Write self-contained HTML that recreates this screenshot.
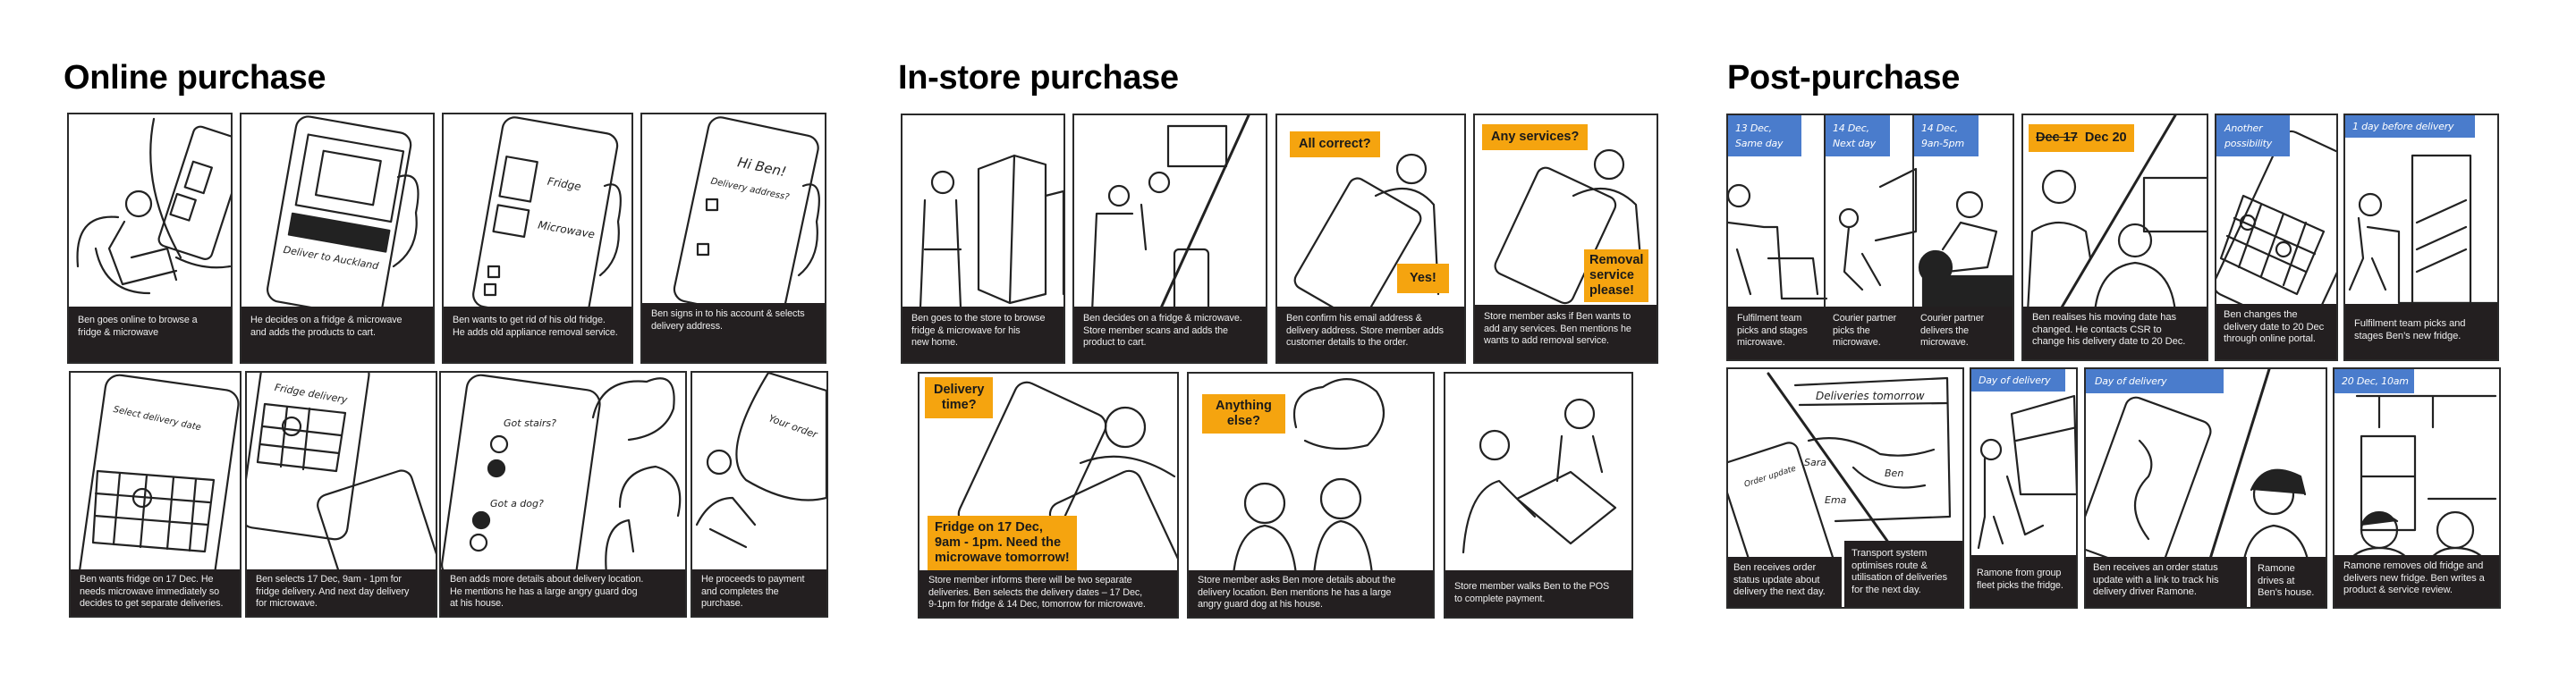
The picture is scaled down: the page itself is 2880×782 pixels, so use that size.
<!DOCTYPE html>
<html><head><meta charset="utf-8"><style>
*{margin:0;padding:0;box-sizing:border-box}
body{width:2880px;height:782px;background:#fff;position:relative;overflow:hidden;font-family:"Liberation Sans",sans-serif}
h1{position:absolute;top:66px;font-size:38px;font-weight:bold;color:#000;letter-spacing:-0.3px}
.p{position:absolute;border:2px solid #2a2a2a;background:#fff;overflow:hidden}
.c{position:absolute;left:0;right:0;bottom:0;background:#231f20;color:#eee;font-size:10.8px;line-height:13.6px;padding:9px 10px;white-space:nowrap;letter-spacing:-0.1px}
.cc{position:absolute;background:#231f20;color:#eee;font-size:10.8px;line-height:13.6px;padding:8px 8px;white-space:nowrap;letter-spacing:-0.1px}
svg.s{position:absolute;left:0;top:0}
svg.s *{fill:none;stroke:#222;stroke-width:2.2;stroke-linecap:round;stroke-linejoin:round}
svg.s text{stroke:none;fill:#222;font-family:"DejaVu Sans",sans-serif;font-style:italic}
.o{position:absolute;background:#f5a40f;color:#1a1a1a;font-weight:bold;font-size:14.5px;line-height:17px;padding:5px 8px;white-space:nowrap}
.b{position:absolute;background:#4a7ccc;color:#fff;font-family:"DejaVu Sans",sans-serif;font-style:italic;font-size:11px;line-height:17px;padding:4px 8px;white-space:nowrap;letter-spacing:-0.2px}
.v{position:absolute;width:2px;background:#2a2a2a}
</style></head><body>

<h1 style="left:71px">Online purchase</h1>
<h1 style="left:1004px">In-store purchase</h1>
<h1 style="left:1931px">Post-purchase</h1>

<!-- ONLINE ROW 1 -->
<div class="p" style="left:75px;top:126px;width:185px;height:281px">
<svg class="s" width="185" height="220"><path d="M95 5 Q80 80 125 160 M120 160 Q150 175 180 170"/><rect x="118" y="18" width="62" height="140" rx="8" transform="rotate(18 150 90)"/><rect x="128" y="58" width="22" height="30" transform="rotate(18 150 90)"/><rect x="122" y="98" width="22" height="24" transform="rotate(18 150 90)"/><circle cx="78" cy="100" r="14"/><path d="M10 170 Q5 110 55 115 M62 120 L45 150 L60 190 L120 175 M70 160 L110 150 L120 185 M30 150 Q40 200 90 200"/></svg>
<div class="c" style="height:62px">Ben goes online to browse a<br>fridge &amp; microwave</div></div>
<div class="p" style="left:268px;top:126px;width:218px;height:281px">
<svg class="s" width="218" height="220"><rect x="45" y="10" width="130" height="210" rx="14" transform="rotate(10 110 110)"/><rect x="60" y="30" width="108" height="80" transform="rotate(10 110 110)"/><rect x="80" y="45" width="65" height="50" transform="rotate(10 110 110)"/><rect x="58" y="120" width="110" height="24" transform="rotate(10 110 110)" style="fill:#222"/><path d="M175 70 Q205 60 195 110 Q200 150 170 170"/><text x="55" y="165" font-size="11" transform="rotate(10 110 110)">Deliver to Auckland</text></svg>
<div class="c" style="height:62px">He decides on a fridge &amp; microwave<br>and adds the products to cart.</div></div>
<div class="p" style="left:494px;top:126px;width:214px;height:281px">
<svg class="s" width="214" height="220"><rect x="50" y="10" width="130" height="215" rx="14" transform="rotate(10 110 110)"/><rect x="60" y="55" width="35" height="45" transform="rotate(10 110 110)"/><rect x="60" y="110" width="35" height="30" transform="rotate(10 110 110)"/><rect x="50" y="170" width="12" height="12"/><rect x="46" y="190" width="12" height="12"/><path d="M180 80 Q205 70 195 120 Q200 160 175 180"/><text x="110" y="78" font-size="12" transform="rotate(10 110 110)">Fridge</text><text x="108" y="128" font-size="12" transform="rotate(10 110 110)">Microwave</text></svg>
<div class="c" style="height:62px">Ben wants to get rid of his old fridge.<br>He adds old appliance removal service.</div></div>
<div class="p" style="left:716px;top:126px;width:208px;height:281px">
<svg class="s" width="208" height="220"><rect x="55" y="10" width="125" height="210" rx="14" transform="rotate(12 110 110)"/><rect x="72" y="95" width="12" height="12"/><rect x="62" y="145" width="12" height="12"/><path d="M180 80 Q205 70 195 120 Q200 160 175 180"/><text x="95" y="60" font-size="15" transform="rotate(12 110 110)">Hi Ben!</text><text x="70" y="85" font-size="10" transform="rotate(12 110 110)">Delivery address?</text></svg>
<div class="c" style="height:66px;padding-top:6px">Ben signs in to his account &amp; selects<br>delivery address.</div></div>

<!-- ONLINE ROW 2 -->
<div class="p" style="left:77px;top:415px;width:193px;height:276px">
<svg class="s" width="193" height="225"><rect x="25" y="10" width="150" height="240" rx="16" transform="rotate(8 100 120)"/><path d="M30 110 L160 120 L150 200 L25 190 Z M55 112 L48 192 M85 115 L78 195 M115 117 L108 197 M140 119 L133 199 M28 135 L155 145 M27 160 L153 170"/><circle cx="80" cy="140" r="10"/><text x="45" y="55" font-size="10" transform="rotate(12 100 60)">Select delivery date</text></svg>
<div class="c" style="height:52px;padding-top:5px">Ben wants fridge on 17 Dec. He<br>needs microwave immediately so<br>decides to get separate deliveries.</div></div>
<div class="p" style="left:274px;top:415px;width:215px;height:276px">
<svg class="s" width="215" height="225"><rect x="5" y="-20" width="120" height="200" rx="14" transform="rotate(8 60 80)"/><path d="M20 35 L110 45 L100 110 L12 100 Z M45 38 L38 105 M70 40 L63 108 M18 60 L105 70 M15 80 L103 90"/><circle cx="50" cy="60" r="10"/><rect x="95" y="120" width="110" height="140" rx="12" transform="rotate(-18 150 190)"/><text x="30" y="25" font-size="11" transform="rotate(10 60 25)">Fridge delivery</text></svg>
<div class="c" style="height:52px;padding-top:5px">Ben selects 17 Dec, 9am - 1pm for<br>fridge delivery. And next day delivery<br>for microwave.</div></div>
<div class="p" style="left:491px;top:415px;width:277px;height:276px">
<svg class="s" width="277" height="225"><rect x="15" y="10" width="150" height="230" rx="16" transform="rotate(8 90 120)"/><circle cx="65" cy="80" r="9"/><circle cx="62" cy="107" r="9" style="fill:#222"/><circle cx="45" cy="165" r="9" style="fill:#222"/><circle cx="42" cy="190" r="9"/><path d="M170 50 Q180 5 230 10 Q265 -5 260 40 Q250 70 210 75 M200 150 Q200 110 240 105 Q275 115 265 160 M185 225 Q180 170 210 165 L215 200"/><text x="70" y="60" font-size="11">Got stairs?</text><text x="55" y="150" font-size="11">Got a dog?</text></svg>
<div class="c" style="height:52px;padding-top:5px">Ben adds more details about delivery location.<br>He mentions he has a large angry guard dog<br>at his house.</div></div>
<div class="p" style="left:772px;top:415px;width:154px;height:276px">
<svg class="s" width="154" height="225"><path d="M85 0 L150 20 L150 140 Q110 150 60 120 Q30 90 85 0"/><circle cx="30" cy="100" r="13"/><path d="M5 170 Q20 140 45 140 L70 170 M20 175 L60 195"/><text x="80" y="60" font-size="11" transform="rotate(20 100 70)">Your order</text></svg>
<div class="c" style="height:52px;padding-top:5px">He proceeds to payment<br>and completes the<br>purchase.</div></div>

<!-- IN-STORE ROW 1 -->
<div class="p" style="left:1007px;top:127px;width:184px;height:280px">
<svg class="s" width="184" height="220"><path d="M85 60 L125 45 L160 55 L160 200 L120 210 L85 195 Z M125 45 L120 210"/><path d="M160 90 L180 85 L180 200"/><circle cx="45" cy="75" r="12"/><path d="M25 95 L20 215 M60 95 L65 215 M25 150 L65 150"/></svg>
<div class="c" style="height:62px;padding-top:7px">Ben goes to the store to browse<br>fridge &amp; microwave for his<br>new home.</div></div>
<div class="p" style="left:1199px;top:127px;width:218px;height:280px">
<svg class="s" width="218" height="220"><path d="M195 0 L95 220" style="stroke-width:3"/><rect x="105" y="12" width="65" height="45"/><rect x="112" y="150" width="38" height="70" rx="5"/><circle cx="50" cy="90" r="11"/><circle cx="95" cy="75" r="11"/><path d="M20 220 L25 110 L65 110 M75 100 L80 150"/></svg>
<div class="c" style="height:62px;padding-top:7px">Ben decides on a fridge &amp; microwave.<br>Store member scans and adds the<br>product to cart.</div></div>
<div class="p" style="left:1426px;top:127px;width:213px;height:280px">
<svg class="s" width="213" height="220"><rect x="45" y="80" width="90" height="140" rx="10" transform="rotate(30 90 150)"/><circle cx="150" cy="60" r="16"/><path d="M110 90 Q150 70 175 100 L180 200"/></svg>
<div class="o" style="left:14px;top:18px;padding:6px 10px">All correct?</div>
<div class="o" style="left:134px;top:166px;padding:8px 14px">Yes!</div>
<div class="c" style="height:62px;padding-top:7px">Ben confirm his email address &amp;<br>delivery address. Store member adds<br>customer details to the order.</div></div>
<div class="p" style="left:1647px;top:127px;width:207px;height:280px">
<svg class="s" width="207" height="220"><rect x="40" y="70" width="95" height="130" rx="10" transform="rotate(25 90 140)"/><circle cx="150" cy="55" r="16"/><path d="M110 90 Q150 70 180 100 L185 160"/></svg>
<div class="o" style="left:8px;top:10px;padding:6px 10px">Any services?</div>
<div class="o" style="left:122px;top:150px;padding:4px 6px">Removal<br>service<br>please!</div>
<div class="c" style="height:64px;padding-top:7px">Store member asks if Ben wants to<br>add any services. Ben mentions he<br>wants to add removal service.</div></div>

<!-- IN-STORE ROW 2 -->
<div class="p" style="left:1026px;top:416px;width:292px;height:276px">
<svg class="s" width="292" height="225"><rect x="70" y="20" width="110" height="175" rx="14" transform="rotate(25 125 110)"/><rect x="170" y="120" width="110" height="175" rx="14" transform="rotate(-25 225 200)"/><circle cx="230" cy="60" r="22"/><path d="M180 100 Q230 80 285 115"/></svg>
<div class="o" style="left:6px;top:4px;padding:6px 10px;text-align:center">Delivery<br>time?</div>
<div class="o" style="left:9px;top:159px;padding:5px 8px">Fridge on 17 Dec,<br>9am - 1pm. Need the<br>microwave tomorrow!</div>
<div class="c" style="height:52px;padding-top:5px">Store member informs there will be two separate<br>deliveries. Ben selects the delivery dates – 17 Dec,<br>9-1pm for fridge &amp; 14 Dec, tomorrow for microwave.</div></div>
<div class="p" style="left:1327px;top:416px;width:277px;height:276px">
<svg class="s" width="277" height="225"><path d="M120 60 Q110 20 150 15 Q180 -5 210 20 Q230 50 200 80 Q160 90 130 75"/><circle cx="85" cy="145" r="22"/><circle cx="170" cy="140" r="22"/><path d="M50 225 Q55 175 85 170 Q115 175 120 225 M140 225 Q145 170 170 165 Q200 170 205 225"/></svg>
<div class="o" style="left:15px;top:23px;padding:5px 15px;text-align:center">Anything<br>else?</div>
<div class="c" style="height:52px;padding-top:5px">Store member asks Ben more details about the<br>delivery location. Ben mentions he has a large<br>angry guard dog at his house.</div></div>
<div class="p" style="left:1614px;top:416px;width:212px;height:276px">
<svg class="s" width="212" height="225"><circle cx="55" cy="80" r="16"/><circle cx="150" cy="45" r="16"/><path d="M20 200 Q25 130 60 120 L100 160 M80 140 L140 110 L190 150 L140 190 Z M130 70 L125 120 M165 70 L175 110"/></svg>
<div class="c" style="height:52px;padding-top:12px">Store member walks Ben to the POS<br>to complete payment.</div></div>

<!-- POST ROW 1 -->
<div class="p" style="left:1930px;top:127px;width:322px;height:277px">
<svg class="s" width="322" height="220"><circle cx="12" cy="90" r="12"/><path d="M0 120 L40 125 L55 125 L60 205 L110 205 M45 160 L95 160 L100 200 M10 150 L25 200"/><circle cx="135" cy="115" r="10"/><path d="M135 125 L130 175 L150 195 M170 80 L210 60 L210 130 L165 140 M150 155 L170 190"/><circle cx="232" cy="170" r="18" style="fill:#222"/><circle cx="270" cy="100" r="14"/><path d="M240 150 L260 120 L300 130 L290 170 L245 175"/><rect x="218" y="180" width="100" height="40" style="fill:#222"/></svg>
<div class="v" style="left:107px;top:0;height:220px"></div><div class="v" style="left:206px;top:0;height:220px"></div>
<div class="b" style="left:0;top:0;width:82px;padding-top:6px;padding-bottom:6px">13 Dec,<br>Same day</div>
<div class="b" style="left:109px;top:0;width:72px;padding-top:6px;padding-bottom:6px">14 Dec,<br>Next day</div>
<div class="b" style="left:208px;top:0;width:72px;padding-top:6px;padding-bottom:6px">14 Dec,<br>9an-5pm</div>
<div class="c" style="height:59px;padding:8px 10px"><span style="position:absolute;left:10px;top:7px">Fulfilment team<br>picks and stages<br>microwave.</span><span style="position:absolute;left:117px;top:7px">Courier partner<br>picks the<br>microwave.</span><span style="position:absolute;left:215px;top:7px">Courier partner<br>delivers the<br>microwave.</span></div></div>
<div class="p" style="left:2260px;top:127px;width:209px;height:277px">
<svg class="s" width="209" height="220"><path d="M170 0 L40 220" style="stroke-width:3"/><circle cx="40" cy="80" r="18"/><path d="M5 220 L10 130 Q40 110 70 130 L75 160"/><rect x="135" y="70" width="72" height="60"/><circle cx="125" cy="140" r="18"/><path d="M80 220 Q85 170 125 165 Q165 170 170 220"/></svg>
<div class="o" style="left:6px;top:10px;padding:7px 8px"><s>Dec 17</s>&nbsp; Dec 20</div>
<div class="c" style="height:59px;padding-top:6px;font-size:11.2px">Ben realises his moving date has<br>changed. He contacts CSR to<br>change his delivery date to 20 Dec.</div></div>
<div class="p" style="left:2476px;top:127px;width:138px;height:277px">
<svg class="s" width="138" height="220"><rect x="30" y="30" width="120" height="200" rx="12" transform="rotate(25 90 130)"/><path d="M30 90 L120 130 L90 200 L5 160 Z M50 100 L25 170 M75 110 L50 180 M100 120 L75 190 M20 115 L110 155 M12 135 L100 175"/><circle cx="35" cy="120" r="8"/><circle cx="75" cy="150" r="8"/></svg>
<div class="b" style="left:0;top:0;width:82px;padding:6px 9px">Another<br>possibility</div>
<div class="c" style="height:62px;padding:6px 8px;font-size:11.2px">Ben changes the<br>delivery date to 20 Dec<br>through online portal.</div></div>
<div class="p" style="left:2620px;top:127px;width:174px;height:277px">
<svg class="s" width="174" height="220"><rect x="75" y="45" width="65" height="165"/><path d="M80 120 L135 95 M80 150 L135 125 M80 175 L135 150"/><circle cx="28" cy="100" r="12"/><path d="M15 115 L20 160 L5 195 M30 160 L45 195 M25 125 L60 130 L60 210 L170 210"/></svg>
<div class="b" style="left:0;top:0;width:145px">1 day before delivery</div>
<div class="c" style="height:62px;padding-top:16px;font-size:11.2px">Fulfilment team picks and<br>stages Ben’s new fridge.</div></div>

<!-- POST ROW 2 -->
<div class="p" style="left:1930px;top:411px;width:266px;height:270px">
<svg class="s" width="266" height="270"><path d="M45 5 L180 195" style="stroke-width:3"/><path d="M75 18 L245 10 L248 165 L120 170"/><path d="M80 40 L245 38"/><rect x="10" y="90" width="90" height="150" rx="10" transform="rotate(-18 55 165)"/><path d="M90 80 Q130 70 170 95 Q200 100 230 90 M140 110 Q170 140 220 130"/><text x="98" y="34" font-size="12">Deliveries tomorrow</text><text x="85" y="108" font-size="11">Sara</text><text x="175" y="120" font-size="11">Ben</text><text x="108" y="150" font-size="11">Ema</text><text x="18" y="125" font-size="9" transform="rotate(-18 40 125)">Order update</text></svg>
<div class="cc" style="left:-2px;top:210px;width:129px;height:58px;padding:6px 8px;font-size:11.2px">Ben receives order<br>status update about<br>delivery the next day.</div>
<div class="cc" style="left:130px;top:192px;width:134px;height:76px;padding:8px 8px;font-size:11.2px">Transport system<br>optimises route &amp;<br>utilisation of deliveries<br>for the next day.</div></div>
<div class="p" style="left:2202px;top:411px;width:121px;height:270px">
<svg class="s" width="121" height="225"><path d="M45 50 L115 30 L118 140 L55 140 Z M50 80 L118 65"/><circle cx="22" cy="90" r="11"/><path d="M15 100 L15 165 L8 200 M25 165 L35 195 M40 120 L60 185 L80 175"/></svg>
<div class="b" style="left:0;top:0;width:105px">Day of delivery</div>
<div class="c" style="height:58px;padding:14px 6px">Ramone from group<br>fleet picks the fridge.</div></div>
<div class="p" style="left:2330px;top:411px;width:272px;height:270px">
<svg class="s" width="272" height="225"><path d="M205 0 L135 225" style="stroke-width:3"/><rect x="15" y="40" width="100" height="180" rx="12" transform="rotate(20 65 130)"/><path d="M60 80 Q80 100 70 120 Q40 150 70 190"/><circle cx="210" cy="140" r="22"/><path d="M185 135 Q200 100 240 120 L245 140" style="fill:#222"/><path d="M175 225 Q180 180 210 175 Q245 180 250 225"/></svg>
<div class="b" style="left:0;top:0;width:154px;padding:5px 10px">Day of delivery</div>
<div class="cc" style="left:0;top:210px;width:180px;height:58px;padding:6px 8px;font-size:11.2px">Ben receives an order status<br>update with a link to track his<br>delivery driver Ramone.</div>
<div class="cc" style="left:184px;top:210px;width:86px;height:58px;padding:7px 8px;font-size:11.2px">Ramone<br>drives at<br>Ben’s house.</div></div>
<div class="p" style="left:2608px;top:411px;width:188px;height:270px">
<svg class="s" width="188" height="225"><path d="M25 30 L180 30 M50 30 L50 65 M110 30 L110 65 M30 75 L90 75 L90 180 L30 180 Z M30 120 L90 120 M105 145 L180 145"/><circle cx="50" cy="180" r="20"/><path d="M30 175 Q40 150 70 170" style="fill:#222"/><circle cx="135" cy="180" r="20"/><path d="M10 225 Q20 200 50 200 Q80 200 90 225 M100 225 Q110 200 135 200 Q165 200 175 225"/></svg>
<div class="b" style="left:0;top:0;width:89px;padding:5px 8px">20 Dec, 10am</div>
<div class="c" style="height:58px;padding-top:6px;font-size:11.2px">Ramone removes old fridge and<br>delivers new fridge. Ben writes a<br>product &amp; service review.</div></div>

</body></html>
